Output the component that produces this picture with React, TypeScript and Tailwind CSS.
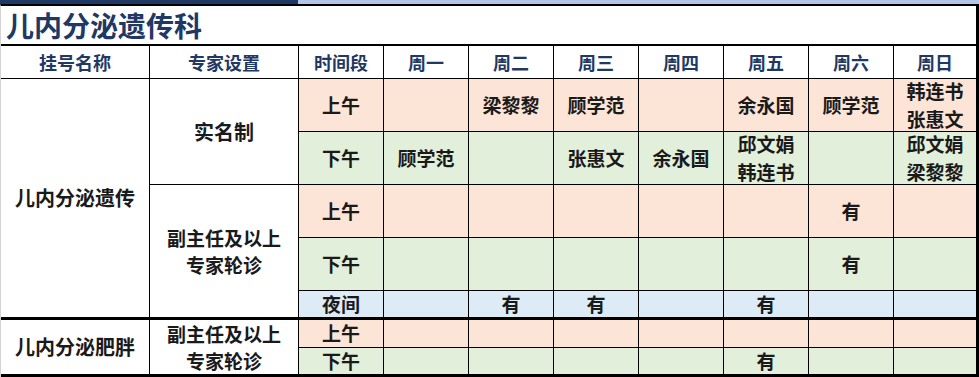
import React from "react";

const PEACH = "bg-[#fce4d6]";
const GREEN = "bg-[#e2efda]";
const BLUE = "bg-[#ddebf7]";

type Row = { label: string; bg: string; cells: string[][] };

const rows: Row[] = [
  { label: "上午", bg: PEACH, cells: [[], ["梁黎黎"], ["顾学范"], [], ["余永国"], ["顾学范"], ["韩连书", "张惠文"]] },
  { label: "下午", bg: GREEN, cells: [["顾学范"], [], ["张惠文"], ["余永国"], ["邱文娟", "韩连书"], [], ["邱文娟", "梁黎黎"]] },
  { label: "上午", bg: PEACH, cells: [[], [], [], [], [], ["有"], []] },
  { label: "下午", bg: GREEN, cells: [[], [], [], [], [], ["有"], []] },
  { label: "夜间", bg: BLUE, cells: [[], ["有"], ["有"], [], ["有"], [], []] },
];

const rows2: Row[] = [
  { label: "上午", bg: PEACH, cells: [[], [], [], [], [], [], []] },
  { label: "下午", bg: GREEN, cells: [[], [], [], [], ["有"], [], []] },
];

const headers = ["挂号名称", "专家设置", "时间段", "周一", "周二", "周三", "周四", "周五", "周六", "周日"];

function renderRow(r: Row, key: string) {
  return (
    <React.Fragment key={key}>
      <div className={`${r.bg} flex items-center justify-center`}>{r.label}</div>
      {r.cells.map((c, i) => (
        <div key={i} className={`${r.bg} flex flex-col items-center justify-center leading-[28px]`}>
          {c.map((t, j) => (
            <span key={j}>{t}</span>
          ))}
        </div>
      ))}
    </React.Fragment>
  );
}

export default function App() {
  return (
    <div
      className="w-[979px] h-[377px] bg-white overflow-hidden flex flex-col"
      style={{ fontFamily: '"Noto Sans CJK SC", "Noto Sans", sans-serif' }}
    >
      <div className="flex h-[4px] shrink-0">
        <div className="w-[298px] bg-[#1f3864]" />
        <div className="flex-1 bg-[#b4c6e7]" />
      </div>
      <div className="flex-1 flex flex-col border-t-2 border-black border-r-[3px] border-l border-l-[#d4d4d4]">
        <div className="h-[38px] flex items-center pl-[5px] text-[28px] font-bold text-[#1f3864] leading-none">
          儿内分泌遗传科
        </div>
        <div className="grid grid-cols-[148px_148px_84px_84px_84px_84px_84px_84px_84px_1fr] grid-rows-[32px_52px_52px_52px_52px_26px_1px_27px_26px] gap-px bg-black pt-[2px] pb-[3px] text-[19px] font-bold text-[#1a1a1a]">
          <div className="col-start-1 row-start-2 row-span-5 bg-white flex items-center justify-center text-[20px]">
            儿内分泌遗传
          </div>
          <div className="col-start-2 row-start-2 row-span-2 bg-white flex items-center justify-center text-[20px]">
            实名制
          </div>
          <div className="col-start-2 row-start-4 row-span-3 bg-white flex flex-col items-center justify-center leading-[27.5px]">
            <span>副主任及以上</span>
            <span>专家轮诊</span>
          </div>
          <div className="col-start-1 col-span-10 row-start-7 bg-black" />
          <div className="col-start-1 row-start-8 row-span-2 bg-white flex items-center justify-center text-[20px]">
            儿内分泌肥胖
          </div>
          <div className="col-start-2 row-start-8 row-span-2 bg-white flex flex-col items-center justify-center leading-[27.5px]">
            <span>副主任及以上</span>
            <span>专家轮诊</span>
          </div>
          {headers.map((h) => (
            <div key={h} className="bg-white flex items-center justify-center text-[18px] text-[#1f3864]">
              {h}
            </div>
          ))}
          {rows.map((r, i) => renderRow(r, "a" + i))}
          {rows2.map((r, i) => renderRow(r, "b" + i))}
        </div>
      </div>
    </div>
  );
}
